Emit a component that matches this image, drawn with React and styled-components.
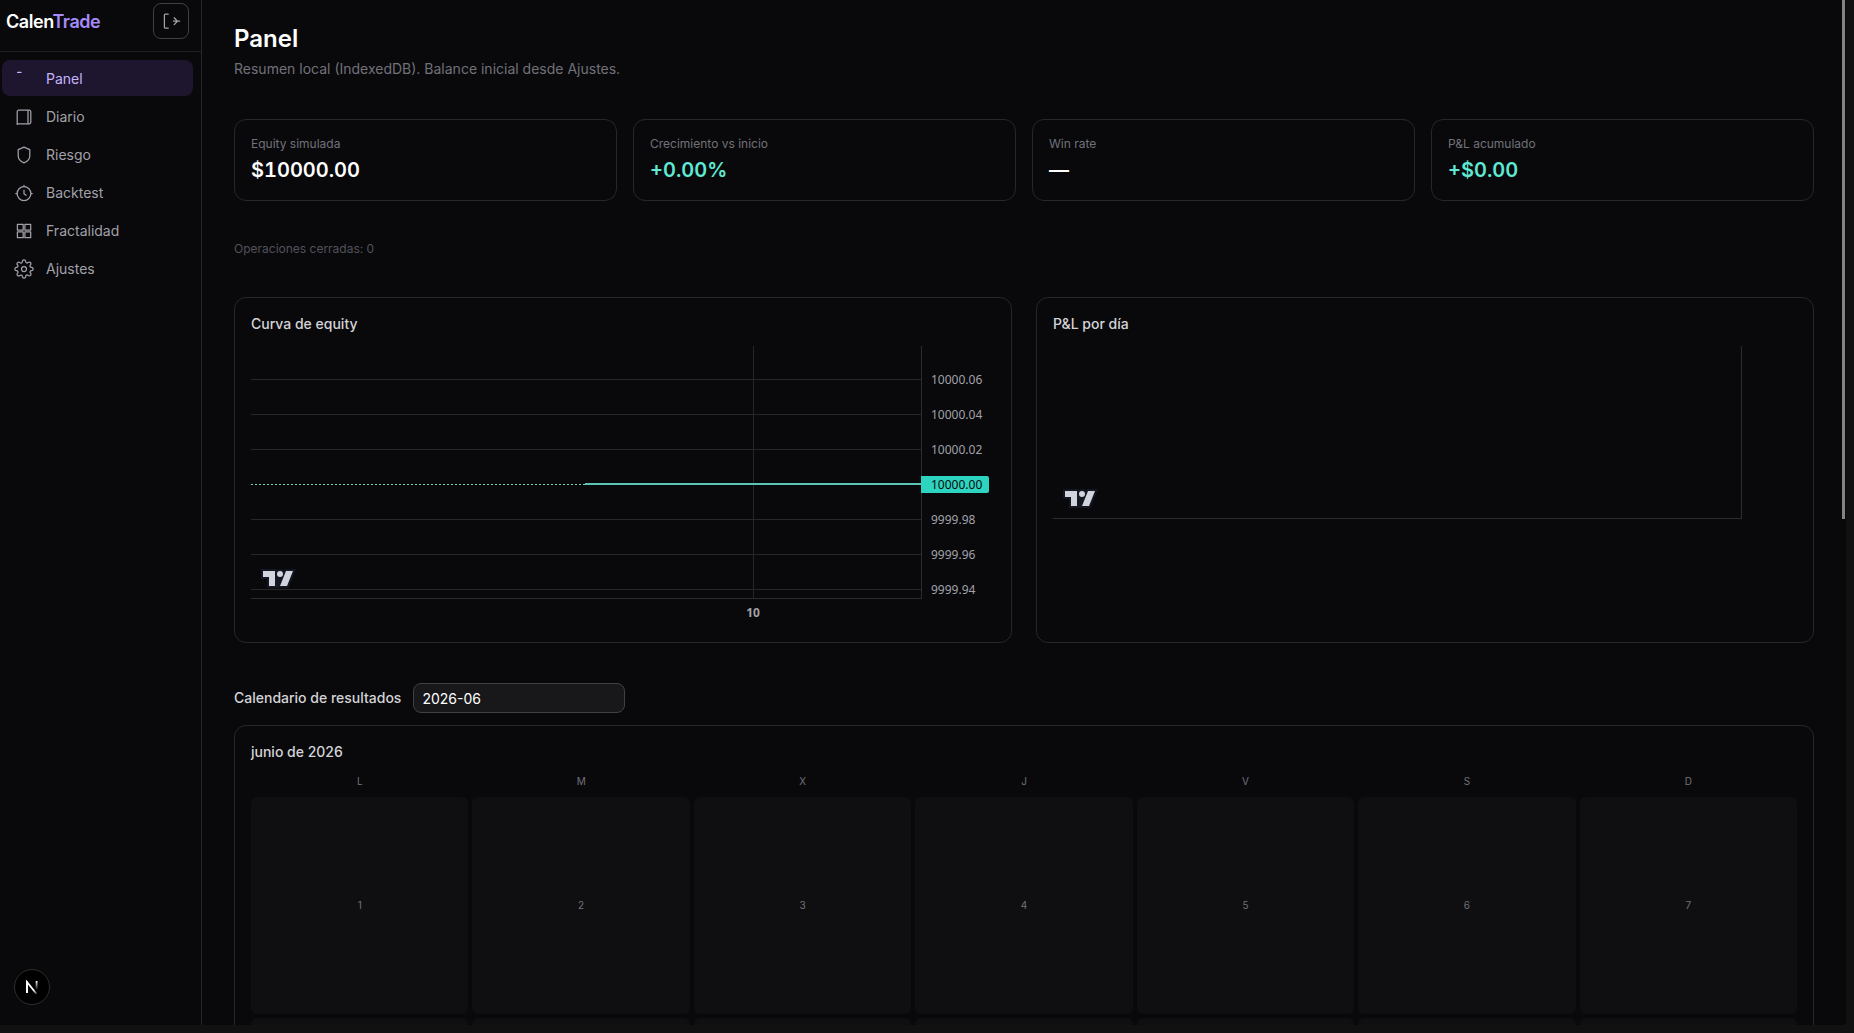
import { useState } from "react";
import styled, { createGlobalStyle } from "styled-components";
import { FiSettings } from "react-icons/fi";

const links = [
  { name: "Panel", icon: <PanelIcon /> },
  { name: "Diario", icon: <BookIcon /> },
  { name: "Riesgo", icon: <ShieldIcon /> },
  { name: "Backtest", icon: <ClockIcon /> },
  { name: "Fractalidad", icon: <SquaresIcon /> },
  { name: "Ajustes", icon: <FiSettings size={20} strokeWidth={1.5} /> },
];

const stats = [
  { label: "Equity simulada", value: "$10000.00" },
  { label: "Crecimiento vs inicio", value: "+0.00%", positive: true },
  { label: "Win rate", value: "—" },
  { label: "P&L acumulado", value: "+$0.00", positive: true },
];

const prices = ["10000.06", "10000.04", "10000.02", "10000.00", "9999.98", "9999.96", "9999.94"];
const lastPrice = "10000.00";
const priceStep = 35;
const firstPriceY = 33;

const weekDays = ["L", "M", "X", "J", "V", "S", "D"];
const days = Array.from({ length: 30 }, (_, i) => i + 1);

export default function App() {
  const [month, setMonth] = useState("2026-06");

  return (
    <>
      <GlobalStyle />
      <Frame>
        <Window>
          <Sidebar />
          <Main>
            <header>
              <Title>Panel</Title>
              <Subtitle>Resumen local (IndexedDB). Balance inicial desde Ajustes.</Subtitle>
            </header>
            <Stats>
              {stats.map((stat) => (
                <Card key={stat.label}>
                  <StatLabel>{stat.label}</StatLabel>
                  <StatValue $positive={stat.positive}>{stat.value}</StatValue>
                </Card>
              ))}
            </Stats>
            <Closed>Operaciones cerradas: 0</Closed>
            <Charts>
              <Card>
                <CardTitle>Curva de equity</CardTitle>
                <EquityChart />
              </Card>
              <Card>
                <CardTitle>P&L por día</CardTitle>
                <Chart $height={200} $scale={55}>
                  <Plot>
                    <ChartLogo />
                  </Plot>
                </Chart>
              </Card>
            </Charts>
            <Results>
              <MonthPicker>
                <label htmlFor="month">Calendario de resultados</label>
                <MonthInput id="month" value={month} onChange={(e) => setMonth(e.target.value)} />
              </MonthPicker>
              <Card>
                <CardTitle>junio de 2026</CardTitle>
                <Calendar>
                  {weekDays.map((day) => (
                    <WeekDay key={day}>{day}</WeekDay>
                  ))}
                  {days.map((day) => (
                    <Day key={day}>{day}</Day>
                  ))}
                </Calendar>
              </Card>
            </Results>
          </Main>
          <ScrollThumb />
          <DevBadge type="button" aria-label="Dev tools">
            <NextLogo />
          </DevBadge>
        </Window>
      </Frame>
    </>
  );
}

function Sidebar() {
  return (
    <Aside>
      <Brand>
        <Logo href="#">
          Calen<span>Trade</span>
        </Logo>
        <Toggle type="button" aria-label="Contraer menú">
          <CollapseIcon />
        </Toggle>
      </Brand>
      <Nav>
        {links.map((link, index) => (
          <NavLink key={link.name} href="#" $active={index === 0}>
            {link.icon}
            {link.name}
          </NavLink>
        ))}
      </Nav>
    </Aside>
  );
}

function EquityChart() {
  const lastY = firstPriceY + prices.indexOf(lastPrice) * priceStep;

  return (
    <Chart $height={280} $scale={73}>
      <Plot>
        <svg width="100%" height="100%" shapeRendering="crispEdges">
          <g stroke="#27272a">
            {prices.map((price, i) => {
              const y = firstPriceY + i * priceStep + 0.5;
              return price === lastPrice ? null : <line key={price} x1="0" x2="100%" y1={y} y2={y} />;
            })}
            <line x1="75%" x2="75%" y1="0" y2="100%" />
          </g>
          <line x1="0" x2="100%" y1={lastY + 0.5} y2={lastY + 0.5} stroke="#6fd0c0" strokeDasharray="2 2" />
          <line x1="49.8%" x2="100%" y1={lastY} y2={lastY} stroke="#5cc4b4" strokeWidth="2" />
        </svg>
        <ChartLogo />
      </Plot>
      <PriceScale>
        {prices.map((price) => (
          <li key={price}>
            <Price $last={price === lastPrice}>{price}</Price>
          </li>
        ))}
      </PriceScale>
      <TimeScale>
        <TimeMark>10</TimeMark>
      </TimeScale>
    </Chart>
  );
}

function ChartLogo() {
  return (
    <LogoLink href="#" aria-label="TradingView">
      <svg width="35" height="19" viewBox="0 0 35 19">
        <path
          fill="#131722"
          d="M0 0h16v1.1a5 5 0 0 1 7 .8L23.7 0h11.2l-7.5 19H6v-9H0Z"
        />
        <path
          fill="#d1d4dc"
          d="M14 2H2v6h6v9h6V2Zm12 15h-7l6-15h7l-6 15Zm-7-9a3 3 0 1 0 0-6 3 3 0 0 0 0 6Z"
        />
      </svg>
    </LogoLink>
  );
}

function Icon({ children }) {
  return (
    <svg
      width="20"
      height="20"
      viewBox="0 0 20 20"
      fill="none"
      stroke="currentColor"
      strokeWidth="1.25"
      strokeLinecap="round"
      strokeLinejoin="round"
    >
      {children}
    </svg>
  );
}

function PanelIcon() {
  return (
    <Icon>
      <path d="M3.6 3.4h3.4" />
    </Icon>
  );
}

function BookIcon() {
  return (
    <Icon>
      <path d="M3.2 17.4V4.8A1.6 1.6 0 0 1 4.8 3.2h10.4a1.6 1.6 0 0 1 1.6 1.6v10.4a1.6 1.6 0 0 1-1.6 1.6H4.2l-1 .6M14 3.2v13.6" />
    </Icon>
  );
}

function ShieldIcon() {
  return (
    <Icon>
      <path d="M10 2.2 4.2 4.6v6.2c0 3.2 2.4 5.8 5.8 7 3.4-1.2 5.8-3.8 5.8-7V4.6L10 2.2Z" />
    </Icon>
  );
}

function ClockIcon() {
  return (
    <Icon>
      <circle cx="10" cy="10.6" r="6.9" />
      <path d="M10 7.4v3.4l2 1.5M10 2.4v1.2M1.8 10.6h1.2M17 10.6h1.2" />
    </Icon>
  );
}

function SquaresIcon() {
  return (
    <Icon>
      <path d="M3.4 3.4h5.8v5.8H3.4zM10.9 3.4h5.8v5.8h-5.8zM3.4 10.9h5.8v5.8H3.4zM10.9 10.9h5.8v5.8h-5.8z" />
    </Icon>
  );
}

function CollapseIcon() {
  return (
    <Icon>
      <path d="M7.2 3.2H4.4a1 1 0 0 0-1 1v12a1 1 0 0 0 1 1h2.8M12.4 10.2h6.2M13.2 6.8l3.2 3.4-3.2 3.4" />
    </Icon>
  );
}

function NextLogo() {
  return (
    <svg width="14" height="14" viewBox="0 0 14 14" fill="none" strokeWidth="1.8">
      <defs>
        <linearGradient id="diagonal" x1="7" y1="7" x2="12" y2="14" gradientUnits="userSpaceOnUse">
          <stop offset="0.4" stopColor="#fff" />
          <stop offset="1" stopColor="#fff" stopOpacity="0.2" />
        </linearGradient>
        <linearGradient id="stem" x1="11" y1="1" x2="11" y2="10" gradientUnits="userSpaceOnUse">
          <stop stopColor="#fff" />
          <stop offset="1" stopColor="#fff" stopOpacity="0" />
        </linearGradient>
      </defs>
      <path d="M2 13V2l9.6 12" stroke="url(#diagonal)" />
      <path d="M2 13V1.4" stroke="#fff" />
      <path d="M11.6 1v9" stroke="url(#stem)" />
    </svg>
  );
}

const GlobalStyle = createGlobalStyle`
  * {
    box-sizing: border-box;
    margin: 0;
    padding: 0;
  }
  body {
    background: #111111;
    color: #e4e4e7;
    font-family: "Inter", sans-serif;
    font-size: 14px;
    line-height: 20px;
  }
  button, input {
    font: inherit;
    color: inherit;
  }
`;

const Frame = styled.div`
  height: 100vh;
  padding: 0 8px 8px 0;
`;

const Window = styled.div`
  position: relative;
  display: flex;
  height: 100%;
  overflow: hidden;
  background: #09090b;
  border-bottom-right-radius: 4px;
`;

const Aside = styled.aside`
  flex: none;
  width: 202px;
  border-right: 1px solid #27272a;
`;

const Brand = styled.div`
  display: flex;
  align-items: center;
  justify-content: space-between;
  padding: 3px 12px 12px 6px;
  border-bottom: 1px solid #1f1f23;
`;

const Logo = styled.a`
  padding-top: 2px;
  font-size: 18px;
  font-weight: 600;
  line-height: 28px;
  letter-spacing: -0.025em;
  text-decoration: none;
  color: #ffffff;
  span {
    color: #a78bfa;
  }
`;

const Toggle = styled.button`
  display: flex;
  align-items: center;
  justify-content: center;
  width: 36px;
  height: 36px;
  background: none;
  border: 1px solid #3f3f46;
  border-radius: 8px;
  color: #a1a1aa;
`;

const Nav = styled.nav`
  display: flex;
  flex-direction: column;
  gap: 2px;
  padding: 8px 8px 8px 2px;
`;

const NavLink = styled.a`
  display: flex;
  align-items: center;
  gap: 12px;
  height: 36px;
  padding: 1px 12px 0;
  border-radius: 8px;
  text-decoration: none;
  color: ${(props) => (props.$active ? "#c4b5fd" : "#a1a1aa")};
  background: ${(props) => (props.$active ? "#1e152f" : "transparent")};
`;

const Main = styled.main`
  flex: 1;
  min-width: 0;
  display: flex;
  flex-direction: column;
  gap: 40px;
  padding: 23px 32px 32px;
  overflow-y: auto;
  scrollbar-width: none;
  > * {
    flex: none;
  }
`;

const Title = styled.h1`
  font-size: 24px;
  font-weight: 600;
  line-height: 32px;
  color: #ffffff;
`;

const Subtitle = styled.p`
  margin-top: 4px;
  color: #71717a;
`;

const Stats = styled.section`
  display: grid;
  grid-template-columns: repeat(4, 1fr);
  gap: 16px;
`;

const Card = styled.div`
  min-width: 0;
  padding: 16px;
  border: 1px solid #27272a;
  border-radius: 12px;
`;

const StatLabel = styled.p`
  font-size: 12px;
  line-height: 16px;
  color: #71717a;
`;

const StatValue = styled.p`
  margin-top: 4px;
  font-size: 20px;
  font-weight: 600;
  line-height: 28px;
  font-variant-numeric: tabular-nums;
  color: ${(props) => (props.$positive ? "#5eead4" : "#ffffff")};
`;

const Closed = styled.p`
  font-size: 12px;
  line-height: 16px;
  color: #52525b;
`;

const Charts = styled.section`
  display: grid;
  grid-template-columns: repeat(2, 1fr);
  gap: 24px;
`;

const CardTitle = styled.h2`
  margin-bottom: 12px;
  font-size: 14px;
  font-weight: 500;
  line-height: 20px;
  color: #d4d4d8;
`;

const Chart = styled.div`
  display: grid;
  grid-template-columns: 1fr ${(props) => props.$scale}px;
  grid-template-rows: 1fr 27px;
  height: ${(props) => props.$height}px;
  font-family: "Noto Sans", sans-serif;
  font-size: 12px;
  line-height: 17px;
  color: #a1a1aa;
`;

const Plot = styled.div`
  position: relative;
  border: solid #2b2b33;
  border-width: 0 1px 1px 0;
  svg {
    display: block;
  }
`;

const LogoLink = styled.a`
  position: absolute;
  left: 10px;
  bottom: 10px;
`;

const PriceScale = styled.ul`
  position: relative;
  height: 0;
  padding-top: 16px;
  list-style: none;
  li {
    display: flex;
    align-items: center;
    height: 35px;
  }
`;

const Price = styled.span`
  margin-left: -1px;
  padding: 0 7px 0 10px;
  border-radius: 0 2px 2px 0;
  color: ${(props) => (props.$last ? "#09090b" : "inherit")};
  background: ${(props) => (props.$last ? "#2dd4bf" : "none")};
`;

const TimeScale = styled.div`
  position: relative;
`;

const TimeMark = styled.span`
  position: absolute;
  left: 75%;
  top: 5px;
  margin-left: -8px;
  font-weight: 700;
`;

const Results = styled.section`
  display: flex;
  flex-direction: column;
  gap: 12px;
`;

const MonthPicker = styled.div`
  display: flex;
  align-items: center;
  gap: 12px;
  label {
    font-weight: 500;
    color: #d4d4d8;
  }
`;

const MonthInput = styled.input`
  width: 212px;
  height: 30px;
  padding: 4px 8px;
  background: #18181b;
  border: 1px solid #3f3f46;
  border-radius: 8px;
  color: #ffffff;
`;

const Calendar = styled.div`
  display: grid;
  grid-template-columns: repeat(7, 1fr);
  gap: 4px;
  font-size: 10px;
  line-height: 15px;
  text-align: center;
  color: #71717a;
`;

const WeekDay = styled.div`
  padding-bottom: 4px;
`;

const Day = styled.div`
  display: flex;
  align-items: center;
  justify-content: center;
  aspect-ratio: 1;
  border-radius: 6px;
  background: #0f0f11;
`;

const ScrollThumb = styled.div`
  position: absolute;
  top: 0;
  right: 1px;
  width: 3px;
  height: 50.6%;
  background: #848484;
`;

const DevBadge = styled.button`
  position: absolute;
  left: 14px;
  bottom: 20px;
  display: flex;
  align-items: center;
  justify-content: center;
  width: 36px;
  height: 36px;
  border: 1px solid #2e2e2e;
  border-radius: 50%;
  background: #000000;
`;
